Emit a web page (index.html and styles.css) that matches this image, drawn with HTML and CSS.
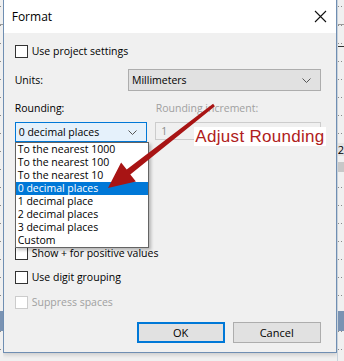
FILE: index.html
```html
<!DOCTYPE html>
<html lang="en">
<head>
  <meta charset="UTF-8">
  <meta name="viewport" content="width=device-width, initial-scale=1.0">
  <title>Format</title>
  <link rel="stylesheet" href="styles.css">
</head>
<body>
  <div class="desk">
    <div class="strip strip-left">
      <span class="peek-line"></span>
      <span class="peek-blue"></span>
    </div>

    <div class="dialog">
      <div class="titlebar">
        <span class="title">Format</span>
        <svg class="close" width="13" height="13" viewBox="0 0 13 13">
          <path d="M1 1 L12 12 M12 1 L1 12" stroke="#111" stroke-width="1.1" fill="none"/>
        </svg>
      </div>

      <div class="content">
        <label class="check row-project">
          <span class="box"></span>Use project settings
        </label>

        <div class="units-row">
          <span class="units-label">Units:</span>
          <div class="combo combo-units">
            <span>Millimeters</span>
            <svg class="chev" width="9" height="5" viewBox="0 0 9 5"><path d="M0.5 0.5 L4.5 4.5 L8.5 0.5" stroke="#555" fill="none"/></svg>
          </div>
        </div>

        <div class="labels-row">
          <span class="round-label">Rounding:</span>
          <span class="incr-label">Rounding increment:</span>
        </div>

        <div class="rounding-row">
          <div class="combo combo-round">
            <span>0 decimal places</span>
            <svg class="chev" width="9" height="5" viewBox="0 0 9 5"><path d="M0.5 0.5 L4.5 4.5 L8.5 0.5" stroke="#555" fill="none"/></svg>
          </div>
          <div class="incr-input">1</div>

          <!-- Open dropdown list -->
          <ul class="droplist">
            <li>To the nearest 1000</li>
            <li>To the nearest 100</li>
            <li>To the nearest 10</li>
            <li class="selected">0 decimal places</li>
            <li>1 decimal place</li>
            <li>2 decimal places</li>
            <li>3 decimal places</li>
            <li>Custom</li>
          </ul>
        </div>

        <label class="check row-plus">
          <span class="box"></span>Show + for positive values
        </label>
        <label class="check row-digit">
          <span class="box"></span>Use digit grouping
        </label>
        <label class="check row-suppress disabled">
          <span class="box"></span>Suppress spaces
        </label>

        <div class="buttons">
          <button class="btn btn-ok">OK</button>
          <button class="btn">Cancel</button>
        </div>
      </div>
    </div>

    <div class="strip strip-right">
      <span class="peek-line"></span>
      <span class="peek-dark"></span>
      <span class="peek-two">2</span>
      <span class="peek-bar"></span>
      <span class="peek-blue"></span>
    </div>
  </div>

  <!-- Annotation overlay -->
  <svg class="arrow" width="344" height="361" viewBox="0 0 344 361">
    <polygon fill="#a81414" points="214.9,106.2 213.1,103.8 126.7,169.6 121.1,162.6 108,188 135.9,181.5 130.3,174.4"/>
  </svg>
  <div class="note">Adjust Rounding</div>
</body>
</html>
```

FILE: styles.css
```css
/* General Styles */
body {
  margin: 0;
  width: 344px;
  height: 361px;
  overflow: hidden;
  position: relative;
  background-color: #f0f0f0;
  font-family: "Open Sans", "Noto Sans", sans-serif;
  font-size: 10.5px;
  color: #000;
}

.desk {
  display: flex;
  height: 361px;
}

/* Background window peeking out at the sides */
.strip {
  position: relative;
  background-color: #f0f0f0;
  background-image: repeating-linear-gradient(to right, #8a8a8a 0 1px, transparent 1px 3px);
}

.strip::before {
  content: "";
  position: absolute;
  inset: 0;
  background: repeating-linear-gradient(to bottom, #f0f0f0 0 17px, transparent 17px 18px);
  background-position: 0 8px;
}

.strip span {
  position: absolute;
  left: 0;
  right: 0;
}

.strip-left {
  width: 3px;
}

.strip-right {
  width: 7px;
  border-left: 1px solid #c8d2dc;
}

.peek-line {
  top: 24px;
  height: 1px;
  background: #9a9a9a;
}

.peek-dark {
  top: 46px;
  height: 1px;
  background: #333;
}

.peek-two {
  top: 143px;
  font-size: 11px;
  line-height: 13px;
  background: #e4e4e4;
  overflow: hidden;
}

.peek-bar {
  top: 162px;
  height: 10px;
  background: #c8c8c8;
}

.peek-blue {
  top: 311px;
  height: 20px;
  background: #7a93b3;
}

/* Dialog */
.dialog {
  width: 332px;
  height: 352px;
  border: 1px solid #6f8eb2;
  border-top: none;
  background-color: #f0f0f0;
  box-shadow: 0 2px 4px rgba(0, 0, 0, 0.15);
  display: flex;
  flex-direction: column;
}

.titlebar {
  height: 33px;
  background-color: #fff;
  display: flex;
  align-items: center;
  justify-content: space-between;
  padding: 0 9px 0 8px;
  flex-shrink: 0;
}

.title {
  font-size: 12px;
}

.content {
  position: relative;
  padding: 0 15px 0 11px;
  display: flex;
  flex-direction: column;
}

/* Checkboxes */
.check {
  display: flex;
  align-items: center;
  height: 13px;
  line-height: 13px;
  white-space: nowrap;
}

.box {
  width: 11px;
  height: 11px;
  border: 1px solid #333;
  background: #fff;
  margin-right: 4px;
  flex-shrink: 0;
}

.row-project { margin-top: 12px; }
.row-plus { margin-top: 105px; }
.row-digit { margin-top: 11px; }
.row-suppress { margin-top: 12px; }

.disabled {
  color: #a0a0a0;
}

.disabled .box {
  border-color: #cccccc;
}

/* Units */
.units-row {
  display: flex;
  align-items: center;
  margin-top: 11px;
  height: 22px;
}

.units-label {
  width: 116px;
}

.combo {
  display: flex;
  align-items: center;
  justify-content: space-between;
  box-sizing: border-box;
  padding: 0 9px 0 3px;
}

.combo-units {
  width: 197px;
  height: 22px;
  background-color: #e1e1e1;
  border: 1px solid #adadad;
}

/* Rounding */
.labels-row {
  display: flex;
  margin-top: 10px;
  height: 14px;
  line-height: 14px;
}

.round-label {
  width: 141px;
}

.incr-label {
  color: #a0a0a0;
}

.rounding-row {
  position: relative;
  display: flex;
  margin-top: 7px;
  height: 20px;
}

.combo-round {
  width: 133px;
  height: 20px;
  background-color: #e5f1fb;
  border: 1px solid #0078d7;
}

.incr-input {
  margin-left: 8px;
  width: 166px;
  height: 18px;
  box-sizing: border-box;
  border: 1px solid #cccccc;
  color: #8a8a8a;
  padding-left: 5px;
  line-height: 16px;
}

.droplist {
  position: absolute;
  top: 20px;
  left: 0;
  width: 132px;
  margin: 0;
  padding: 0;
  list-style: none;
  background: #fff;
  border: 1px solid #646464;
  box-shadow: 2px 2px 3px rgba(0, 0, 0, 0.25);
  z-index: 2;
}

.droplist li {
  height: 13px;
  line-height: 13px;
  padding-left: 2px;
  white-space: nowrap;
}

.droplist .selected {
  background-color: #0078d7;
  color: #fff;
}

/* Buttons */
.buttons {
  display: flex;
  justify-content: flex-end;
  gap: 8px;
  margin-top: 13px;
}

.btn {
  width: 88px;
  height: 21px;
  font-family: inherit;
  font-size: 11px;
  background-color: #e1e1e1;
  border: 1px solid #adadad;
  padding: 0;
  color: #000;
}

.btn-ok {
  border: 2px solid #0078d7;
}

/* Annotation */
.arrow {
  position: absolute;
  top: 0;
  left: 0;
  pointer-events: none;
  z-index: 3;
}

.note {
  position: absolute;
  top: 127px;
  left: 194px;
  width: 132px;
  height: 19px;
  background: #fff;
  color: #b02020;
  font-family: "Liberation Sans", Arial, sans-serif;
  font-size: 17px;
  line-height: 19px;
  text-align: center;
  letter-spacing: 0.3px;
  z-index: 4;
}
```
